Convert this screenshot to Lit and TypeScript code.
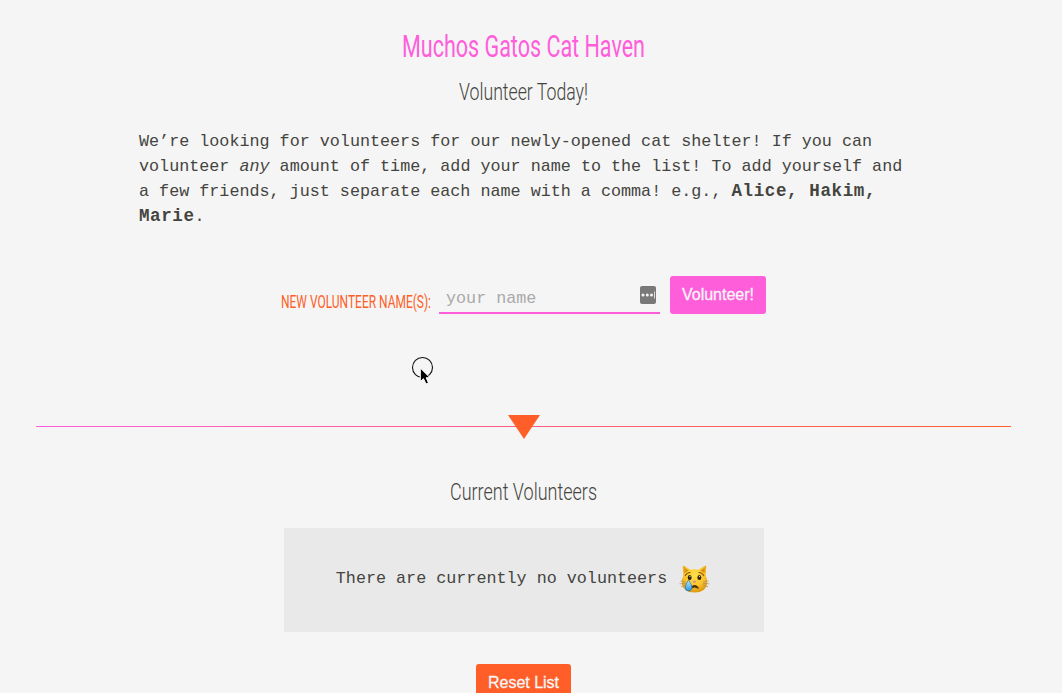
import { LitElement, html, css } from "lit";
import { customElement, property } from "lit/decorators.js";

@customElement("narrow-text")
class NarrowText extends LitElement {
  @property() text = "";
  @property({ type: Number }) width = 100;
  @property({ type: Number }) size = 24;
  @property({ type: Number }) weight = 300;
  static styles = css`
    :host { display: block; }
    svg { display: block; margin: 0 auto; overflow: visible; }
    text { font-family: Roboto, "Liberation Sans", sans-serif; fill: currentColor; }
  `;
  render() {
    return html`<svg width=${this.width} height=${Math.round(this.size)}>
      <text x="0" y=${Math.round(this.size)} font-size=${this.size} font-weight=${this.weight}
        textLength=${this.width} lengthAdjust="spacingAndGlyphs">${this.text}</text>
    </svg>`;
  }
}

@customElement("crying-cat")
class CryingCat extends LitElement {
  static styles = css`:host, svg { display: block; }`;
  render() {
    return html`<svg width="31" height="30" viewBox="0 0 32 30">
      <defs>
        <radialGradient id="fur" cx=".5" cy=".35" r=".65">
          <stop offset="0" stop-color="#ffe04a"/><stop offset=".6" stop-color="#fbc62c"/><stop offset="1" stop-color="#dc960f"/>
        </radialGradient>
        <linearGradient id="drop" x2="0" y2="1"><stop stop-color="#c3efff"/><stop offset="1" stop-color="#2496e8"/></linearGradient>
      </defs>
      <path d="M4.4 12 3.9 2.2Q4 .8 5.4 1.5L12 5.5Q16 4.4 20 5.5L26.600 1.500Q28 .8 28.100 2.200L27.600 12Q29.500 15 29.200 19Q28 28.700 16 29Q4 28.700 2.800 19Q2.500 15 4.400 12Z" fill="url(#fur)"/>
      <path d="M5.500 9 5.500 3.500 10 6.300ZM26.500 9 26.500 3.500 22 6.300Z" fill="#d99216"/>
      <path d="M6.500 11.500Q8 8.500 11.500 8.300M25.500 11.500Q24 8.500 20.500 8.300" fill="none" stroke="#8b5a11" stroke-width="1.200" stroke-linecap="round"/>
      <ellipse cx="11" cy="13.500" rx="2" ry="2.600" fill="#33200d"/><ellipse cx="21" cy="13.500" rx="2" ry="2.600" fill="#33200d"/>
      <circle cx="11.300" cy="12.500" r=".6" fill="#fff"/><circle cx="21.300" cy="12.500" r=".6" fill="#fff"/>
      <path d="M13.900 17Q16 15.900 18.100 17Q17 19 16 19Q15 19 13.900 17Z" fill="#dc9183"/>
      <path d="M12.500 24.500Q13.500 21.500 16 21.700Q18.800 21.500 20 24.500Q16 21.900 12.500 24.500Z" fill="#4b270c" stroke="#4b270c"/>
      <path d="M7.500 18 1.500 17M7 19.500 .5 20M7.500 21 2 23M24.500 18 30.500 17M25 19.500 31.500 20M24.500 21 30 23" stroke="#a78b64" stroke-width=".8" opacity=".8"/>
      <path d="M9.800 16Q13.500 21 13.300 24Q13 27.300 9.800 27.300Q6.600 27.300 6.500 24Q6.700 20.500 9.800 16Z" fill="url(#drop)" stroke="#2478b3" stroke-width=".7"/>
    </svg>`;
  }
}

@customElement("app-root")
class AppRoot extends LitElement {
  static styles = css`
    :host { display: block; height: 693px; overflow: hidden; position: relative; background: #f5f5f5; color: #444440; }
    * { box-sizing: border-box; }
    main { width: 1047px; display: flex; flex-direction: column; align-items: center; padding-top: 26px; }
    h1, h2, p { margin: 0; font-weight: normal; }
    h1 { color: #ff5edb; }
    .sub { margin-top: 19px; }
    .mono { font-family: "Liberation Mono", monospace; font-size: 16.74px; line-height: 25px; }
    .intro { width: 771px; margin-top: 29px; padding-left: 1px; }
    .intro strong { font-size: 17.500px; letter-spacing: .62px; line-height: 20px; }
    form { display: flex; align-items: flex-start; margin-top: 47px; height: 38px; }
    .label { color: #ff5e28; padding-top: 14px; }
    .field { width: 221px; height: 38px; margin: 0 10px 0 8px; padding: 0 4px 0 7px; border-bottom: 2px solid #ff5edb; display: flex; align-items: center; }
    input { flex: 1; min-width: 0; padding: 9px 0 0; border: 0; outline: 0; background: none; color: inherit; }
    input::placeholder { color: #a9a9a9; opacity: 1; }
    .field svg { display: block; margin-top: 1px; }
    button { height: 38px; padding: 0 0 1px; border: 0; border-radius: 3px; color: #f5f5f5; font: 16px/35px "Liberation Sans", Arial, sans-serif; -webkit-text-stroke: .3px #f5f5f5; }
    .add { width: 96px; background: #ff5edb; }
    .reset { width: 95px; background: #ff5e28; margin-top: 32px; }
    .divider { width: 975px; height: 24px; margin-top: 101px; display: grid; justify-items: center; }
    .line, .divider svg { grid-area: 1 / 1; }
    .line { width: 975px; height: 1px; margin-top: 11px; background: linear-gradient(90deg, #ff5edb 0%, #ff5e28 100%); }
    .current { margin-top: 37px; }
    .list { width: 480px; height: 104px; margin-top: 28px; background: #e9e9e9; display: flex; justify-content: center; align-items: center; gap: 12px; padding-right: 1px; }
    .list p { padding-bottom: 3px; }
    .list crying-cat { margin-top: -3px; }
    .cursor { position: absolute; left: 411px; top: 356px; }
  `;
  render() {
    return html`<main>
      <h1><narrow-text text="Muchos Gatos Cat Haven" .width=${243} .size=${30.500} .weight=${400}></narrow-text></h1>
      <h2 class="sub"><narrow-text text="Volunteer Today!" .width=${129} .size=${24}></narrow-text></h2>
      <p class="intro mono">We’re looking for volunteers for our newly-opened cat shelter! If you can volunteer <em>any</em> amount of time, add your name to the list! To add yourself and a few friends, just separate each name with a comma! e.g., <strong>Alice, Hakim, Marie</strong>.</p>
      <form>
        <label class="label"><narrow-text text="NEW VOLUNTEER NAME(S):" .width=${150} .size=${18.400} .weight=${400}></narrow-text></label>
        <div class="field">
          <input class="mono" placeholder="your name">
          <svg width="16" height="18"><rect width="16" height="18" rx="2" fill="#797979"/><g fill="#f5f5f5"><circle cx="3" cy="9" r="1.500"/><circle cx="7.300" cy="9" r="1.500"/><circle cx="11.500" cy="9" r="1.500"/><path d="M14 5.500h.8v7H14z"/></g></svg>
        </div>
        <button class="add" type="button">Volunteer!</button>
      </form>
      <div class="divider"><div class="line"></div><svg width="32" height="24"><path d="M0 0H32L16 24Z" fill="#ff5e28"/></svg></div>
      <h2 class="current"><narrow-text text="Current Volunteers" .width=${147} .size=${24}></narrow-text></h2>
      <section class="list"><p class="mono">There are currently no volunteers</p><crying-cat></crying-cat></section>
      <button class="reset">Reset List</button>
    </main>
    <svg class="cursor" width="26" height="34"><circle cx="11.500" cy="11.500" r="10" fill="none" stroke="#111" stroke-width="1.100"/><path d="M9.300 12V25.500L12.500 22.700L15 28L17.500 27L15.200 21.700H19Z" fill="#000" stroke="#fff" stroke-width="1"/></svg>`;
  }
}
